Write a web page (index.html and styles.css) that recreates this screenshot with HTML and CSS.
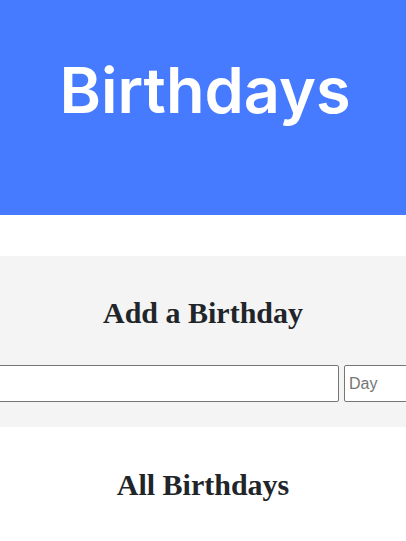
FILE: index.html
```html
<!DOCTYPE html>
<html lang="en">
<head>
<meta charset="utf-8">
<title>Birthdays</title>
<link rel="stylesheet" href="styles.css">
</head>
<body>
<header class="hero">
  <h1 class="hero-title">Birthdays</h1>
</header>
<main>
  <section class="add-section">
    <h2 class="section-title">Add a Birthday</h2>
    <form class="add-form">
      <input class="field field-name" type="text" name="name">
      <input class="field field-day" type="text" name="day" placeholder="Day">
    </form>
  </section>
  <section class="list-section">
    <h2 class="section-title">All Birthdays</h2>
  </section>
</main>
</body>
</html>
```
FILE: styles.css
```css
html, body {
  margin: 0;
  padding: 0;
  background: #ffffff;
  overflow-x: hidden;
}
body {
  font-family: "Liberation Serif", "Times New Roman", serif;
  color: #212529;
}
.hero {
  height: 215px;
  background: #477bff;
  box-sizing: border-box;
  padding-top: 52px;
  margin-bottom: 41px;
}
.hero-title {
  margin: 0;
  padding-left: 4px;
  text-align: center;
  color: #ffffff;
  font-family: Inter, "Open Sans", sans-serif;
  font-weight: 600;
  font-size: 63px;
  line-height: 76px;
  letter-spacing: 0;
}
.add-section {
  background: #f4f4f4;
  padding: 40px 0 25px;
  overflow: hidden;
}
.section-title {
  margin: 0;
  text-align: center;
  font-size: 30px;
  line-height: 34px;
  font-weight: bold;
  color: #212529;
}
.add-form {
  display: flex;
  justify-content: center;
  gap: 5px;
  margin-top: 35px;
}
.field {
  flex: none;
  box-sizing: border-box;
  height: 37px;
  padding: 8px 4px;
  border: 1px solid #767676;
  border-radius: 2px;
  background: #ffffff;
  font-family: "Liberation Sans", Arial, sans-serif;
  font-size: 16px;
  color: #000;
}
.field::placeholder {
  color: #757575;
}
.field-name {
  width: 400px;
}
.field-day {
  width: 123px;
}
.list-section {
  padding-top: 41px;
}
```
